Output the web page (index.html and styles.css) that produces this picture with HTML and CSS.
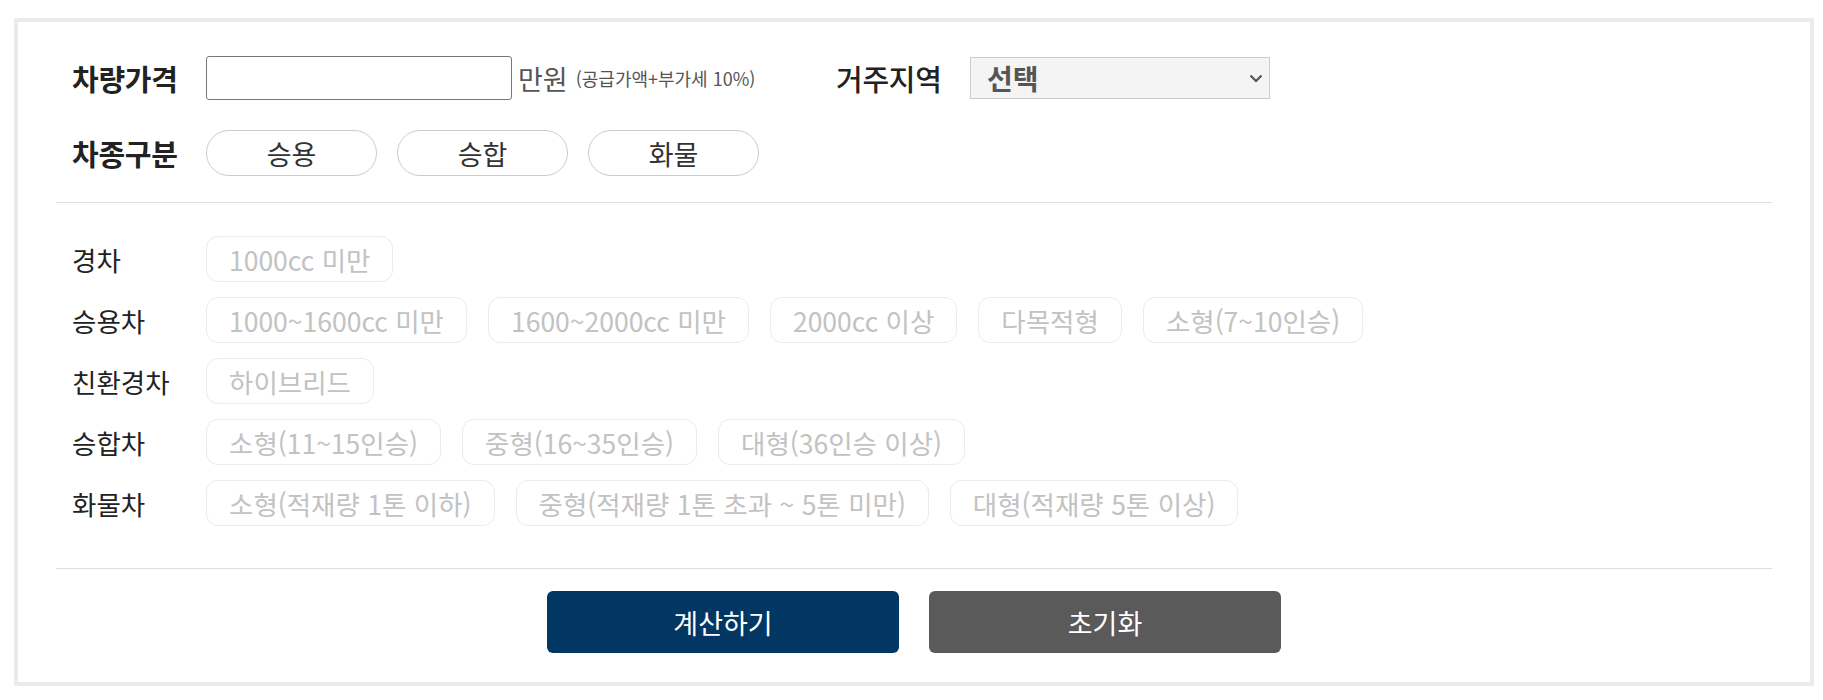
FILE: index.html
```html
<!DOCTYPE html>
<html lang="ko">
<head>
	<meta charset="utf-8">
	<meta name="viewport" content="width=device-width, initial-scale=1.0">
	<title>자동차 취득세 계산</title>
	<link rel="stylesheet" href="styles.css">
</head>
<body>
	<div class="calc-box">
		<!-- 기본 입력 -->
		<div class="calc-top">
			<div class="calc-row">
				<div class="field field-price">
					<label class="field-label" for="carPrice">차량가격</label>
					<input id="carPrice" class="price-input" type="text">
					<span class="unit">만원</span>
					<span class="note">(공급가액+부가세 10%)</span>
				</div>
				<div class="field">
					<label class="field-label field-label-light" for="region">거주지역</label>
					<div class="select-wrap">
						<select id="region" class="region-select">
							<option>선택</option>
						</select>
						<svg class="select-arrow" width="14" height="9" viewBox="0 0 14 9"><path d="M1.5 1.5 7 7l5.5-5.5" fill="none" stroke="#555" stroke-width="2.2"/></svg>
					</div>
				</div>
			</div>
			<div class="calc-row calc-row-type">
				<span class="field-label">차종구분</span>
				<div class="type-btns">
					<button type="button" class="type-btn">승용</button>
					<button type="button" class="type-btn">승합</button>
					<button type="button" class="type-btn">화물</button>
				</div>
			</div>
		</div>

		<!-- 세부 차종 -->
		<div class="calc-detail">
			<div class="detail-row">
				<span class="detail-label">경차</span>
				<div class="chips">
					<span class="chip">1000cc 미만</span>
				</div>
			</div>
			<div class="detail-row">
				<span class="detail-label">승용차</span>
				<div class="chips">
					<span class="chip">1000~1600cc 미만</span>
					<span class="chip">1600~2000cc 미만</span>
					<span class="chip">2000cc 이상</span>
					<span class="chip">다목적형</span>
					<span class="chip">소형(7~10인승)</span>
				</div>
			</div>
			<div class="detail-row">
				<span class="detail-label">친환경차</span>
				<div class="chips">
					<span class="chip">하이브리드</span>
				</div>
			</div>
			<div class="detail-row">
				<span class="detail-label">승합차</span>
				<div class="chips">
					<span class="chip">소형(11~15인승)</span>
					<span class="chip">중형(16~35인승)</span>
					<span class="chip">대형(36인승 이상)</span>
				</div>
			</div>
			<div class="detail-row">
				<span class="detail-label">화물차</span>
				<div class="chips">
					<span class="chip">소형(적재량 1톤 이하)</span>
					<span class="chip">중형(적재량 1톤 초과 ~ 5톤 미만)</span>
					<span class="chip">대형(적재량 5톤 이상)</span>
				</div>
			</div>
		</div>

		<div class="calc-actions">
			<button type="button" class="btn-calc">계산하기</button>
			<button type="button" class="btn-reset">초기화</button>
		</div>
	</div>
</body>
</html>
```

FILE: styles.css
```css
:root {
	--box-border: #ebebeb;
	--line: #dddddd;
	--text: #222;
	--chip-text: #c2c2c2;
	--navy: #023764;
	--gray: #5a5a5a;
}

* { box-sizing: border-box; }

body {
	margin: 0;
	background: #fff;
	color: var(--text);
	font-family: "Noto Sans CJK KR", "Noto Sans", sans-serif;
}

.calc-box {
	width: 1800px;
	margin: 18px 0 0 14px;
	border: 4px solid var(--box-border);
	padding: 34px 38px 29px;
}

/* top inputs */
.calc-top {
	padding: 0 16px 26px;
	border-bottom: 1px solid var(--line);
}

.calc-row {
	display: flex;
	align-items: center;
	height: 44px;
}

.calc-row-type {
	height: 46px;
	margin-top: 30px;
}

.field {
	display: flex;
	align-items: center;
}

.field-price { width: 764px; }

.field-label {
	width: 134px;
	font-size: 29px;
	font-weight: 700;
	line-height: 1;
	letter-spacing: -0.3px;
}

.field-label-light { font-weight: 500; }

.price-input {
	width: 306px;
	height: 44px;
	border: 1px solid #777;
	border-radius: 3px;
	padding: 0 10px;
	font: inherit;
	font-size: 20px;
	outline: none;
}

.unit {
	margin-left: 6px;
	font-size: 27px;
	color: #555;
}

.note {
	margin-left: 8px;
	font-size: 18px;
	color: #555;
}

.select-wrap { position: relative; }

.region-select {
	width: 300px;
	height: 42px;
	border: 1px solid #ccc;
	background: #f4f4f4;
	color: #555;
	font: inherit;
	font-size: 28px;
	font-weight: 700;
	padding: 0 16px;
	-webkit-appearance: none;
	appearance: none;
	outline: none;
}

.select-arrow {
	position: absolute;
	right: 7px;
	top: 17px;
}

.type-btns {
	display: flex;
	gap: 20px;
}

.type-btn {
	width: 171px;
	height: 46px;
	border: 1px solid #ccc;
	border-radius: 23px;
	background: #fff;
	color: #333;
	font: inherit;
	font-size: 27px;
	cursor: pointer;
}

/* detail chips */
.calc-detail {
	display: flex;
	flex-direction: column;
	gap: 15px;
	padding: 33px 16px 42px;
	border-bottom: 1px solid var(--line);
}

.detail-row {
	display: flex;
	align-items: center;
}

.detail-label {
	width: 134px;
	font-size: 26.5px;
}

.chips {
	display: flex;
	gap: 21px;
}

.chip {
	display: flex;
	align-items: center;
	height: 46px;
	padding: 0 22px;
	border: 1px solid #ebebeb;
	border-radius: 12px;
	color: var(--chip-text);
	font-size: 26.5px;
	white-space: nowrap;
}

/* buttons */
.calc-actions {
	display: flex;
	justify-content: center;
	gap: 30px;
	padding-top: 22px;
}

.btn-calc,
.btn-reset {
	width: 352px;
	height: 62px;
	border: none;
	border-radius: 6px;
	color: #fff;
	font: inherit;
	font-size: 27px;
	cursor: pointer;
}

.btn-calc { background: var(--navy); }
.btn-reset { background: var(--gray); }
```
